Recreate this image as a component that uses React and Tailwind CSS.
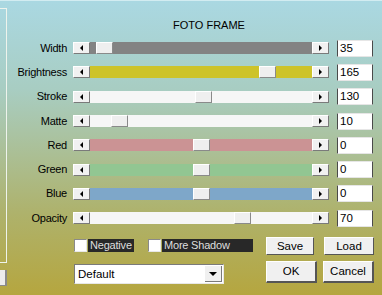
const rows = [
  { label: "Width", value: "35", track: "bg-[#838383]", pos: 6 },
  { label: "Brightness", value: "165", track: "bg-[#cdc32a]", pos: 169 },
  { label: "Stroke", value: "130", track: "bg-[#f6f6f6]", pos: 105 },
  { label: "Matte", value: "10", track: "bg-[#f6f6f6]", pos: 21 },
  { label: "Red", value: "0", track: "bg-[#cb9394]", pos: 103 },
  { label: "Green", value: "0", track: "bg-[#92c692]", pos: 103 },
  { label: "Blue", value: "0", track: "bg-[#7ea7c9]", pos: 103 },
  { label: "Opacity", value: "70", track: "bg-[#f6f6f6]", pos: 144 },
];

function ArrowBtn({ dir }) {
  return (
    <div className="w-[17px] h-[12px] shrink-0 flex items-center justify-center bg-[#f1f1f1] border-t border-l border-white border-r border-b border-r-[#7a7a7a] border-b-[#7a7a7a]">
      {dir === "left" ? (
        <div className="w-0 h-0 border-y-[3px] border-y-transparent border-r-[3px] border-r-black" />
      ) : (
        <div className="w-0 h-0 border-y-[3px] border-y-transparent border-l-[3px] border-l-black" />
      )}
    </div>
  );
}

function SliderRow({ label, value, track, pos }) {
  return (
    <div className="flex items-center h-[24.3px]">
      <div className="w-[60px] text-right text-[11px] tracking-[-0.25px] leading-none text-black">{label}</div>
      <div className="ml-[6px] flex h-[12px] w-[256px]">
        <ArrowBtn dir="left" />
        <div className={`flex-1 flex items-center ${track}`}>
          <div
            className="w-[17px] h-[12px] bg-[#efefef] border-t border-l border-white border-r border-b border-r-[#8a8a8a] border-b-[#8a8a8a]"
            style={{ marginLeft: pos }}
          />
        </div>
        <ArrowBtn dir="right" />
      </div>
      <div className="ml-[8px] w-[36px] h-[17px] bg-white border-l border-r border-[#4a4a4a] border-t border-b border-t-[#e6e6e6] border-b-[#e6e6e6] text-[11.5px] leading-[15px] pl-[2px] text-black">
        {value}
      </div>
    </div>
  );
}

function Check({ label, width }) {
  return (
    <div className="flex items-center">
      <div className="w-[13px] h-[13px] bg-white border-t border-l border-[#8a8a8a] border-r border-b border-r-[#e8e8e8] border-b-[#e8e8e8]" />
      <div className={`ml-[1px] h-[13px] bg-[#282828] text-[#dedede] text-[11px] tracking-[-0.2px] leading-[13px] pl-[2px] ${width}`}>
        {label}
      </div>
    </div>
  );
}

function Btn({ children, size }) {
  return (
    <div
      className={`flex items-center justify-center bg-[#f0f0f0] border-t border-l border-white border-r border-b border-r-[#555] border-b-[#555] text-[11.5px] leading-none text-black ${size}`}
    >
      {children}
    </div>
  );
}

export default function App() {
  return (
    <div className="w-[382px] h-[295px] overflow-hidden bg-[linear-gradient(to_bottom,#aad8e2_0%,#a8cdc2_30%,#abbf95_52%,#aeb26c_72%,#b5a63f_100%)] font-['Liberation_Sans',sans-serif] flex border-t border-[#d2ecf1]">
      {/* sliver of the neighbouring panel */}
      <div className="w-[7px] shrink-0 flex flex-col">
        <div className="mt-[7px] h-[255px] border-t border-r border-b border-[#eef3ec]" />
        <div className="mt-[7px] h-[16px] bg-[#ececec] border-r-2 border-b border-[#8a8a8a]" />
      </div>

      <div className="flex-1 flex flex-col">
        <div className="h-[35px] pl-[166px] pt-[19px] text-[11px] leading-none text-black">FOTO FRAME</div>

        <div className="flex flex-col">
          {rows.map((r) => (
            <SliderRow key={r.label} {...r} />
          ))}
        </div>

        <div className="flex ml-[67px]">
          <div className="w-[192px] flex flex-col">
            <div className="mt-[9px] flex items-center">
              <Check label="Negative" width="w-[46px]" />
              <div className="ml-[14px]">
                <Check label="More Shadow" width="w-[91px]" />
              </div>
            </div>
            <div className="mt-[12px] w-[150px] h-[20px] flex bg-white border-t border-l border-[#7a7a7a] border-r border-b border-r-[#e8e8e8] border-b-[#e8e8e8]">
              <div className="flex-1 text-[11.5px] leading-[18px] pl-[3px] text-black">Default</div>
              <div className="w-[17px] h-[16px] mt-[1px] mr-[1px] flex items-center justify-center bg-[#f0f0f0] border-r border-b border-[#7a7a7a]">
                <div className="w-0 h-0 border-x-[4px] border-x-transparent border-t-[4px] border-t-black" />
              </div>
            </div>
          </div>

          <div className="flex flex-col">
            <div className="mt-[7px] flex gap-[10px]">
              <Btn size="w-[48px] h-[18px]">Save</Btn>
              <Btn size="w-[50px] h-[18px]">Load</Btn>
            </div>
            <div className="mt-[6px] flex gap-[6px]">
              <Btn size="w-[51px] h-[22px] border-r-2 border-b-2 border-r-[#3a3a3a] border-b-[#3a3a3a]">OK</Btn>
              <Btn size="w-[51px] h-[22px] border-r-2 border-b-2 border-r-[#3a3a3a] border-b-[#3a3a3a]">Cancel</Btn>
            </div>
          </div>
        </div>
      </div>
    </div>
  );
}
